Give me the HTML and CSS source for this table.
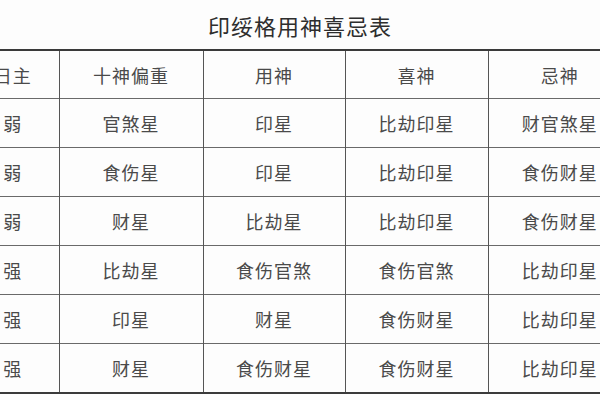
FILE: index.html
```html
<!DOCTYPE html>
<html lang="zh">
<head>
<meta charset="utf-8">
<link rel="stylesheet" href="styles.css">
</head>
<body>
<div class="page">
  <h1 class="title">印绥格用神喜忌表</h1>
  <table class="tbl">
    <colgroup>
      <col class="c0"><col class="c1"><col class="c2"><col class="c3"><col class="c4">
    </colgroup>
    <thead>
      <tr class="hrow"><th>日主</th><th>十神偏重</th><th>用神</th><th>喜神</th><th>忌神</th></tr>
    </thead>
    <tbody>
      <tr><td>弱</td><td>官煞星</td><td>印星</td><td>比劫印星</td><td>财官煞星</td></tr>
      <tr><td>弱</td><td>食伤星</td><td>印星</td><td>比劫印星</td><td>食伤财星</td></tr>
      <tr><td>弱</td><td>财星</td><td>比劫星</td><td>比劫印星</td><td>食伤财星</td></tr>
      <tr><td>强</td><td>比劫星</td><td>食伤官煞</td><td>食伤官煞</td><td>比劫印星</td></tr>
      <tr><td>强</td><td>印星</td><td>财星</td><td>食伤财星</td><td>比劫印星</td></tr>
      <tr><td>强</td><td>财星</td><td>食伤财星</td><td>食伤财星</td><td>比劫印星</td></tr>
    </tbody>
  </table>
</div>
</body>
</html>
```
FILE: styles.css
```css
html, body {
  margin: 0;
  padding: 0;
  background: #fdfdfd;
}
.page {
  width: 600px;
  height: 400px;
  overflow: hidden;
  font-family: "Noto Sans CJK SC", "Noto Sans CJK JP", sans-serif;
}
.title {
  margin: 0;
  height: 49px;
  line-height: 50px;
  text-align: center;
  font-size: 22px;
  font-weight: 400;
  color: #2e2e2e;
  letter-spacing: 1px;
}
.tbl {
  margin-left: -33px;
  width: 664px;
  border-collapse: collapse;
  table-layout: fixed;
  border-top: 2px solid #3a3a3a;
  border-bottom: 2px solid #3a3a3a;
}
.c0 { width: 92px; }
.c1 { width: 144px; }
.c2 { width: 142px; }
.c3 { width: 143px; }
.c4 { width: 143px; }
.tbl th, .tbl td {
  border-left: 1px solid #555;
  border-top: 1px solid #6a6a6a;
  text-align: center;
  font-size: 18px;
  font-weight: 400;
  color: #4a4a4a;
  padding: 0;
  letter-spacing: 1px;
}
.tbl th:first-child, .tbl td:first-child {
  border-left: none;
}
.hrow th {
  height: 47px;
  border-top: none;
}
.tbl td {
  height: 48px;
}
```
